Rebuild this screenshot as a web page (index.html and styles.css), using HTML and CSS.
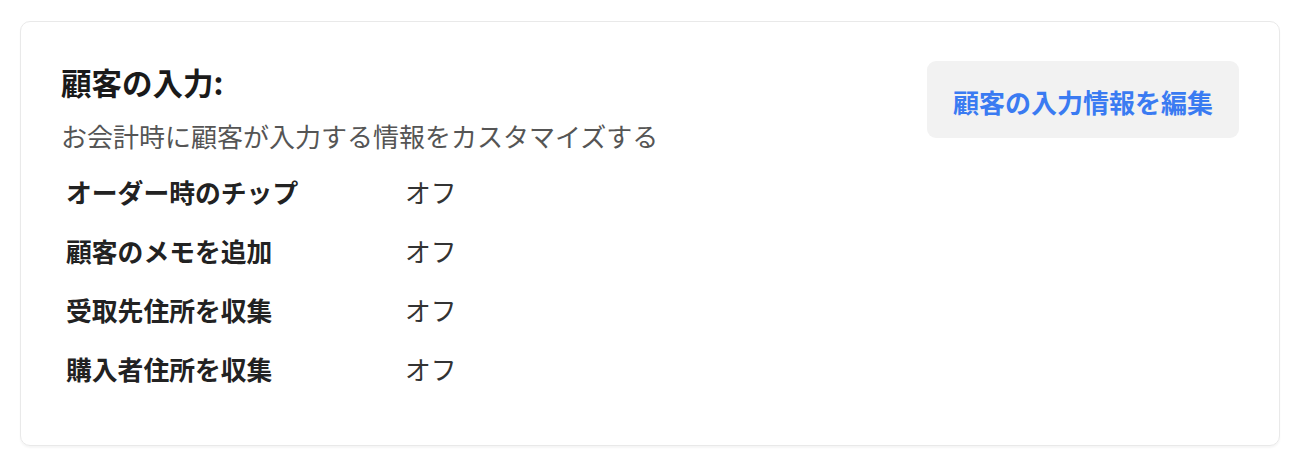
FILE: index.html
```html
<!DOCTYPE html>
<html lang="ja">
<head>
<meta charset="utf-8">
<title>顧客の入力</title>
<link rel="stylesheet" href="styles.css">
</head>
<body>
<div class="card">
	<div class="card-head">
		<div class="card-info">
			<h2 class="card-title">顧客の入力:</h2>
			<p class="card-desc">お会計時に顧客が入力する情報をカスタマイズする</p>
		</div>
		<button class="edit-btn">顧客の入力情報を編集</button>
	</div>
	<dl class="settings">
		<dt>オーダー時のチップ</dt><dd>オフ</dd>
		<dt>顧客のメモを追加</dt><dd>オフ</dd>
		<dt>受取先住所を収集</dt><dd>オフ</dd>
		<dt>購入者住所を収集</dt><dd>オフ</dd>
	</dl>
</div>
</body>
</html>
```

FILE: styles.css
```css
*{box-sizing:border-box;}
body{margin:0;padding:21px 20px;background:#fff;font-family:"Noto Sans CJK JP","Noto Sans",sans-serif;color:#1f1f1f;}

.card{border:1px solid #e9e9e9;border-radius:10px;padding:40px;box-shadow:0 2px 2px rgba(0,0,0,0.04);height:425px;}
.card-head{display:flex;justify-content:space-between;align-items:flex-start;}
.card-title{margin:0;font-size:30.5px;line-height:40px;font-weight:700;color:#1a1a1a;}
.card-desc{margin:16px 0 0;font-size:26px;line-height:36px;color:#555;}

/*button*/
.edit-btn{
	border:none;
	background:#f2f2f2;
	border-radius:9px;
	width:312px;
	height:77px;
	padding:4px 0 0;
	font-family:inherit;
	font-size:26px;
	font-weight:700;
	color:#3a7bf2;
	cursor:pointer;
	margin-top:-1px;
}

.settings{display:grid;grid-template-columns:339px auto;grid-auto-rows:59px;margin:8px 0 0;padding-left:5px;align-items:center;}
.settings dt{font-size:25.8px;font-weight:700;color:#222;}
.settings dd{margin:0;font-size:25.8px;color:#333;}
```
